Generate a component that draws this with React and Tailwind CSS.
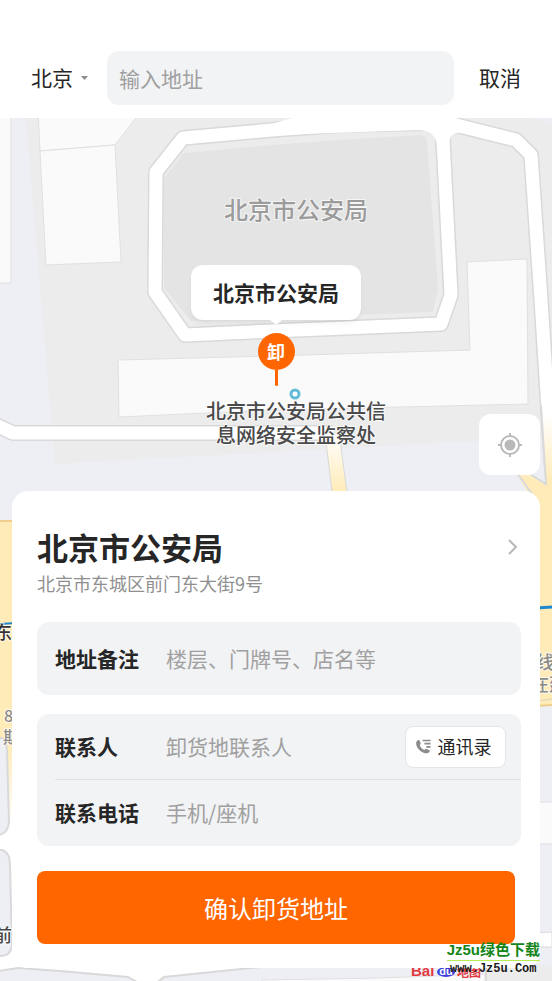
import React from 'react';

const ROAD_EDGE = '#d9d9d9';

const RING = 'M156 172 L183 138 L272 130 L340 125 L425 123 Q442 122 443 140 L451 295 L441 324 L272 331 L185 335 L155 292 Z';
const EAST_ROAD = 'M400 118 L455 125 L516 140 L531 155 L541 300 L552 470';
const SOUTH_ROAD = 'M-4 425 L13 433 L333 433';

function Road({ d, width = 13 }) {
  return (
    <>
      <path d={d} fill="none" stroke={ROAD_EDGE} strokeWidth={width + 3} strokeLinejoin="round" />
      <path d={d} fill="none" stroke="#ffffff" strokeWidth={width} strokeLinejoin="round" />
    </>
  );
}

function MapLabel({ x, y, size, color, anchor = 'start', children }) {
  return (
    <text
      x={x}
      y={y}
      fontSize={size}
      fontWeight="500"
      fill={color}
      textAnchor={anchor}
      stroke="#ffffff"
      strokeOpacity="0.7"
      strokeWidth="2"
      strokeLinejoin="round"
      paintOrder="stroke"
    >
      {children}
    </text>
  );
}

function CityMap() {
  return (
    <svg
      className="absolute inset-0 h-full w-full"
      viewBox="0 118 552 863"
      preserveAspectRatio="xMidYMin slice"
      aria-hidden="true"
    >
      <defs>
        <linearGradient id="fade" x1="0" y1="0" x2="0" y2="1">
          <stop offset="0" stopColor="#ffffff" />
          <stop offset="1" stopColor="#ffebb8" />
        </linearGradient>
        <linearGradient id="fadeOut" x1="0" y1="0" x2="0" y2="1">
          <stop offset="0" stopColor="#ffebb8" />
          <stop offset="1" stopColor="#ffffff" />
        </linearGradient>
        <linearGradient id="avenue" gradientUnits="userSpaceOnUse" x1="0" y1="415" x2="0" y2="480">
          <stop offset="0" stopColor="#ffffff" />
          <stop offset="1" stopColor="#ffebb8" />
        </linearGradient>
      </defs>

      {/* ground */}
      <rect x="0" y="118" width="552" height="863" fill="#eeeff5" />
      <path d="M26 118 L552 118 L552 437 L272 452 L55 464 L41 300 Z" fill="#ececec" />
      <path d="M532 118 H552 V124 Z" fill="#eeeff5" />

      {/* buildings */}
      <g fill="#fafafb" stroke="#e0e0e1">
        <path d="M-2 110 H11 V283 H-2 Z" />
        <path d="M38 110 L142 110 L115 145 L40 151 Z" />
        <path d="M40 151 L115 145 L121 262 L46 265 Z" />
        <path d="M118 360 L272 356 L470 350 L467 262 L527 259 L528 404 L272 410 L119 417 Z" />
      </g>

      {/* roads */}
      <path d="M325 433 L339 433 L347 492 L332 492 Z" fill="url(#fade)" stroke={ROAD_EDGE} />
      <Road d={SOUTH_ROAD} />
      <Road d={EAST_ROAD} />
      <Road d={RING} />
      <path d="M292 118 L455 118 L516 134 L516 138 L462 133 Q449 131 449 145 L437 145 Q435 130 418 130 L272 135 L272 124 Z" fill="#ffffff" />
      <path d="M164 178 L184 153 L272 145 L340 140 L420 135 Q426 135 427 141 L438 288 L433 312 L272 318 L191 321 L164 288 Z" fill="#e4e4e4" />

      {/* avenue on the right */}
      <path d="M514 470 L530 475 L546 485 L541 405 H556 V706 H520 L528 492 Z" fill="url(#avenue)" />
      <path d="M541 405 L546 484 L530 474 M515 470 L532 494" fill="none" stroke={ROAD_EDGE} strokeWidth="2" />
      <path d="M536 701 L552 699" stroke="#dcd3bd" />
      <path d="M536 706 L552 705" stroke="#f0cd8c" strokeWidth="2" />
      <path d="M536 608 L552 607" stroke="#1f87d0" strokeWidth="3" />
      <path d="M530 802 H556 V844 H530 Z" fill="#fafafb" stroke="#dedee2" />
      <path d="M530 933 L552 932 V947 H530 Z" fill="#ffffff" stroke={ROAD_EDGE} />
      <path d="M480 965 H556 V985 H480 Z" fill="#ececec" />

      {/* avenue on the left */}
      <rect x="0" y="522" width="20" height="240" fill="#ffebb8" />
      <path d="M0 521 H20" stroke="#f0cd8c" strokeWidth="2" />
      <rect x="0" y="745" width="20" height="80" fill="url(#fadeOut)" />
      <rect x="0" y="824" width="20" height="150" fill="#ffffff" />
      <path d="M0 624 L16 623" stroke="#1f87d0" strokeWidth="2" />
      <path d="M-4 738 H2 Q6 740 7 750 L9 822 Q8 834 -2 835 Z" fill="#eeeff5" stroke={ROAD_EDGE} strokeWidth="2" />
      <path d="M-4 850 H2 Q10 852 10 866 L12 945 Q11 957 -2 956 Z" fill="#eeeff5" stroke={ROAD_EDGE} strokeWidth="2" />

      {/* street along the bottom edge */}
      <path d="M0 957 H480 V981 H0 Z" fill="#ffffff" />
      <path d="M-2 971 L18 968 L60 971 L128 977 L142 985 H-2 Z" fill="#eeeff5" stroke={ROAD_EDGE} strokeWidth="2" />
      <path d="M154 985 L164 977 L262 967 H486 V985 Z" fill="#eeeff5" stroke={ROAD_EDGE} strokeWidth="2" />
      <path d="M262 985 V980 L380 978 L485 974 V985 Z" fill="#fafafb" stroke="#e0e0e1" />

      <MapLabel x={296} y={219} size={24} color="#9b9b9b" anchor="middle">北京市公安局</MapLabel>
      <circle cx="295" cy="394" r="4" fill="#ffffff" stroke="#63bcd6" strokeWidth="3" />
      <MapLabel x={296} y={419} size={20} color="#4a4a4a" anchor="middle">北京市公安局公共信</MapLabel>
      <MapLabel x={296} y={443} size={20} color="#4a4a4a" anchor="middle">息网络安全监察处</MapLabel>
      <MapLabel x={-6} y={639} size={18} color="#333333">东</MapLabel>
      <MapLabel x={4} y={722} size={16} color="#8a8a8a">8</MapLabel>
      <MapLabel x={3} y={743} size={16} color="#8a8a8a">期</MapLabel>
      <MapLabel x={-6} y={942} size={18} color="#4a4a4a">前</MapLabel>
      <MapLabel x={536} y={669} size={18} color="#8a8a8a">线</MapLabel>
      <MapLabel x={531} y={691} size={18} color="#8a8a8a">在建</MapLabel>

      <g fontFamily="Liberation Sans, Noto Sans CJK SC, sans-serif" fontWeight="700">
        <text x="411" y="976" fontSize="15" fill="#e2393f">Bai</text>
        <ellipse cx="446" cy="972" rx="9" ry="5" fill="#3c3fdc" />
        <text x="446" y="975" fontSize="11" fill="#ffffff" textAnchor="middle">du</text>
        <text x="457" y="977" fontSize="12" fill="#e2393f">地图</text>
      </g>
    </svg>
  );
}

function MapPin() {
  return (
    <div className="absolute left-1/2 top-[147px] flex -translate-x-1/2 flex-col items-center">
      <div className="flex h-[55px] items-center whitespace-nowrap rounded-xl bg-white px-[22px] text-[21px] font-bold text-[#262626] shadow-md shadow-black/5">
        北京市公安局
      </div>
      <svg className="h-[5px] w-3" viewBox="0 0 12 5" aria-hidden="true">
        <path d="M0 0 H12 L7 4 Q6 5 5 4 Z" fill="#ffffff" />
      </svg>
      <div className="mt-2 flex size-[37px] items-center justify-center rounded-full bg-[#ff6600] text-[18px] font-bold text-white">
        卸
      </div>
      <div className="h-4 w-[3px] rounded-b-full bg-[#ff6600]" />
    </div>
  );
}

function LocateIcon() {
  return (
    <svg className="size-6" viewBox="0 0 24 24" fill="none" stroke="#b9b9b9" strokeWidth="2" aria-hidden="true">
      <circle cx="12" cy="12" r="9" />
      <circle cx="12" cy="12" r="5.5" fill="#b9b9b9" stroke="none" />
      <path d="M12 0 V4 M12 20 V24 M0 12 H4 M20 12 H24" />
    </svg>
  );
}

function ContactsIcon() {
  return (
    <svg className="size-[15px]" viewBox="0 0 16 16" aria-hidden="true">
      <path
        d="M1.6 1.6 C2.6.9 3.6 1.1 4 2 L4.9 4.2 C5.2 5 4.9 5.5 4 6.3 C4.4 8.3 6.6 10.9 9 11.6 C9.9 10.7 10.4 10.3 11.2 10.6 L14 11.6 C14.9 12 15 12.8 14.4 13.5 C13 15.4 10.6 15.7 8 14.6 C4 13 .7 9.2.2 5.6 C0 3.8.4 2.4 1.6 1.6 Z"
        fill="#8c8c8c"
      />
      <path d="M7 1.6 H15.5 M9 5 H15.5 M11 8.4 H15.5" stroke="#8c8c8c" strokeWidth="1.8" fill="none" />
    </svg>
  );
}

function Field({ id, label, placeholder, type = 'text', children }) {
  return (
    <div className="flex items-center pr-[15px]">
      <label htmlFor={id} className="w-[111px] shrink-0 text-[21px] font-bold text-[#262626]">{label}</label>
      <input
        id={id}
        type={type}
        placeholder={placeholder}
        className="min-w-0 flex-1 bg-transparent text-[21px] text-[#262626] outline-none placeholder:text-[#a0a0a0]"
      />
      {children}
    </div>
  );
}

function AddressCard() {
  return (
    <form className="rounded-2xl bg-white pb-6 pl-[25px] pr-[19px] pt-[34px]" onSubmit={(e) => e.preventDefault()}>
      <a href="#place" className="flex items-center justify-between">
        <h1 className="text-[31px] font-bold leading-[44px] text-[#262626]">北京市公安局</h1>
        <svg className="h-4 w-[18px]" viewBox="0 0 18 16" aria-hidden="true">
          <path d="M6 1 L13 8 L6 15" fill="none" stroke="#b8b8b8" strokeWidth="2" />
        </svg>
      </a>
      <p className="text-[18px] leading-7 text-[#8f8f8f]">北京市东城区前门东大街9号</p>

      <div className="mt-[25px] grid h-[73px] rounded-xl bg-[#f2f3f5] pl-[18px]">
        <Field id="note" label="地址备注" placeholder="楼层、门牌号、店名等" />
      </div>

      <div className="mt-[19px] grid h-[132px] grid-rows-2 rounded-xl bg-[#f2f3f5] pl-[18px] divide-y divide-[#e2e3e5]">
        <Field id="contact" label="联系人" placeholder="卸货地联系人">
          <button
            type="button"
            className="flex h-[42px] w-[101px] shrink-0 items-center justify-center gap-[7px] rounded-lg border border-[#e4e5e7] bg-white pr-1 text-[18px] text-[#262626]"
          >
            <ContactsIcon />
            通讯录
          </button>
        </Field>
        <Field id="phone" type="tel" label="联系电话" placeholder="手机/座机" />
      </div>

      <div className="mt-[25px] pr-[6px]">
        <button type="submit" className="h-[73px] w-full rounded-lg bg-[#ff6600] text-[24px] text-white">
          确认卸货地址
        </button>
      </div>
    </form>
  );
}

function Watermark() {
  return (
    <div className="absolute bottom-1 right-3 flex flex-col items-center whitespace-nowrap font-['Liberation_Sans','Noto_Sans_CJK_SC',sans-serif] font-bold">
      <span className="text-[15px] leading-5 text-[#14851a]">Jz5u绿色下载</span>
      <span className="h-px w-full bg-[#b4ec51]" />
      <span className="font-['Liberation_Mono',monospace] text-[12px] leading-4 text-[#1a1a1a]">www.Jz5u.Com</span>
    </div>
  );
}

export default function App() {
  return (
    <div className="flex min-h-screen flex-col bg-white font-['Noto_Sans_CJK_SC',sans-serif]">
      <header className="flex items-center pb-[13px] pl-[31px] pr-[31px] pt-[51px]">
        <button type="button" className="flex shrink-0 items-center gap-2 text-[21px] text-[#262626]">
          北京
          <svg className="h-1 w-[7px]" viewBox="0 0 7 4" aria-hidden="true">
            <path d="M0 0 H7 L3.5 4 Z" fill="#8c8c8c" />
          </svg>
        </button>
        <input
          type="search"
          aria-label="输入地址"
          placeholder="输入地址"
          className="ml-[19px] h-[54px] min-w-0 flex-1 rounded-xl bg-[#f2f3f5] px-3 text-[21px] text-[#262626] outline-none placeholder:text-[#a0a0a0]"
        />
        <button type="button" className="ml-[25px] shrink-0 text-[21px] text-[#262626]">取消</button>
      </header>

      <main className="relative flex flex-1 flex-col overflow-hidden">
        <CityMap />
        <MapPin />
        <div className="relative mt-auto flex flex-col px-3 pb-[13px] pt-[296px]">
          <button
            type="button"
            aria-label="定位"
            className="mb-4 flex size-[61px] items-center justify-center self-end rounded-xl bg-white"
          >
            <LocateIcon />
          </button>
          <AddressCard />
        </div>
        <Watermark />
      </main>
    </div>
  );
}
